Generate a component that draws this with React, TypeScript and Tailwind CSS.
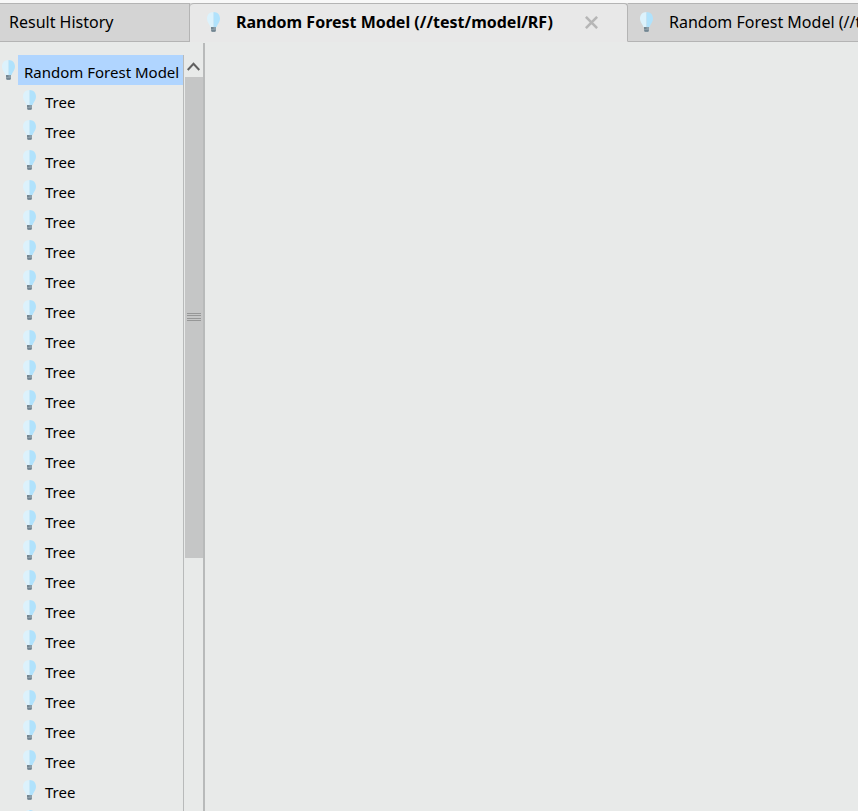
import { useState } from "react";

const tabs = [
  { id: "history", label: "Result History", icon: false },
  { id: "rf-1", label: "Random Forest Model (//test/model/RF)", icon: true },
  { id: "rf-2", label: "Random Forest Model (//test/model/RF)", icon: true },
];

const trees = Array.from({ length: 26 }, (_, i) => ({ id: i, label: "Tree" }));

function BulbIcon() {
  return (
    <svg className="h-5 w-[13px] shrink-0" viewBox="0 0 13 20" aria-hidden="true">
      <path d="M6.5 0C2.500 0 0 2.800 0 6.500c0 2 .8 3.600 1.800 5.200.9 1.300 1.300 2.200 1.500 3.300h3.200z" fill="#dcf2fc" />
      <path d="M6.5 0C10.500 0 13 2.800 13 6.500c0 2-.8 3.600-1.800 5.200-.9 1.300-1.300 2.200-1.500 3.300H6.500z" fill="#b0e2fc" />
      <path d="M4 15h5v3.500L8 20H5l-1-1.500z" fill="#8c9ea9" />
      <path d="M4 15h2.500v2H4zM4.500 18h4v1.500h-4z" fill="#748691" />
    </svg>
  );
}

function TabBar({ active, onSelect }: { active: string; onSelect: (id: string) => void }) {
  return (
    <div role="tablist" className="flex h-[42px] shrink-0 overflow-hidden border-t-[3px] border-[#f8f8f8] bg-[#d4d4d4]">
      <Tab tab={tabs[0]} active={active} onSelect={onSelect} className="w-[190px] pl-[9px]" />
      <Tab tab={tabs[1]} active={active} onSelect={onSelect} className="w-[438px] pl-[17px]" />
      <Tab tab={tabs[2]} active={active} onSelect={onSelect} className="w-[438px] pl-[12px]" />
    </div>
  );
}

type TabProps = {
  tab: (typeof tabs)[number];
  active: string;
  onSelect: (id: string) => void;
  className: string;
};

function Tab({ tab, active, onSelect, className }: TabProps) {
  const selected = tab.id === active;
  return (
    <div
      className={`flex shrink-0 items-center border-y border-r border-[#b4b4b4] pb-px ${className} ${
        selected ? "rounded-t-sm border-b-[#e8e8e8] bg-[#e8e8e8]" : "bg-[#d4d4d4]"
      }`}
    >
      <button
        role="tab"
        aria-selected={selected}
        onClick={() => onSelect(tab.id)}
        className={`flex items-center gap-4 whitespace-nowrap text-base leading-5 ${selected ? "font-bold" : ""}`}
      >
        {tab.icon && <BulbIcon />}
        <span className="pb-px">{tab.label}</span>
      </button>
      {selected && (
        <button aria-label="Close tab" className="mr-[29px] ml-auto">
          <svg className="size-[13px]" viewBox="0 0 12 12" fill="none" stroke="#b6b6b6" strokeWidth="2.400" aria-hidden="true">
            <path d="M.8 .8l10.400 10.400M11.200 .8L.8 11.200" />
          </svg>
        </button>
      )}
    </div>
  );
}

function Scrollbar() {
  return (
    <div className="flex w-5 shrink-0 flex-col border-l border-[#b8baba]">
      <button aria-label="Scroll up" className="flex h-[22px] shrink-0 items-center justify-center">
        <svg className="h-[9px] w-[13px]" viewBox="0 0 13 9" fill="none" stroke="#606060" strokeWidth="2" aria-hidden="true">
          <path d="M.7 8l5.800-6.300L12.300 8" />
        </svg>
      </button>
      <div className="ml-px flex h-[481px] shrink-0 items-center justify-center bg-[#c5c6c6] pb-[2px]">
        <svg className="h-2 w-[14px]" viewBox="0 0 14 8" fill="#969797" aria-hidden="true">
          <path d="M0 0h14v1H0zM0 2h14v1H0zM0 5h14v1H0zM0 7h14v1H0z" />
        </svg>
      </div>
    </div>
  );
}

export default function App() {
  const [active, setActive] = useState("rf-1");

  return (
    <div className="flex h-screen flex-col overflow-hidden bg-[#e8eae9] font-['Noto_Sans',sans-serif] text-black">
      <TabBar active={active} onSelect={setActive} />
      <div className="mt-px flex min-h-0 flex-1">
        <aside className="flex w-[205px] shrink-0 overflow-hidden border-r-2 border-[#b8baba] pt-3">
          <ul role="tree" className="min-w-0 flex-1 overflow-hidden text-[15px] leading-5">
            <li role="treeitem" aria-selected="true" className="flex h-[30px] items-center gap-[3px] pl-[2px]">
              <BulbIcon />
              <span className="flex h-full flex-1 items-center bg-[#b0d5ff] pt-1 pl-[6px] whitespace-nowrap">
                Random Forest Model
              </span>
            </li>
            {trees.map((tree) => (
              <li key={tree.id} role="treeitem" className="flex h-[30px] items-center gap-[9px] pl-[23px]">
                <BulbIcon />
                <span className="pt-1">{tree.label}</span>
              </li>
            ))}
          </ul>
          <Scrollbar />
        </aside>
        <main className="flex-1" />
      </div>
    </div>
  );
}
